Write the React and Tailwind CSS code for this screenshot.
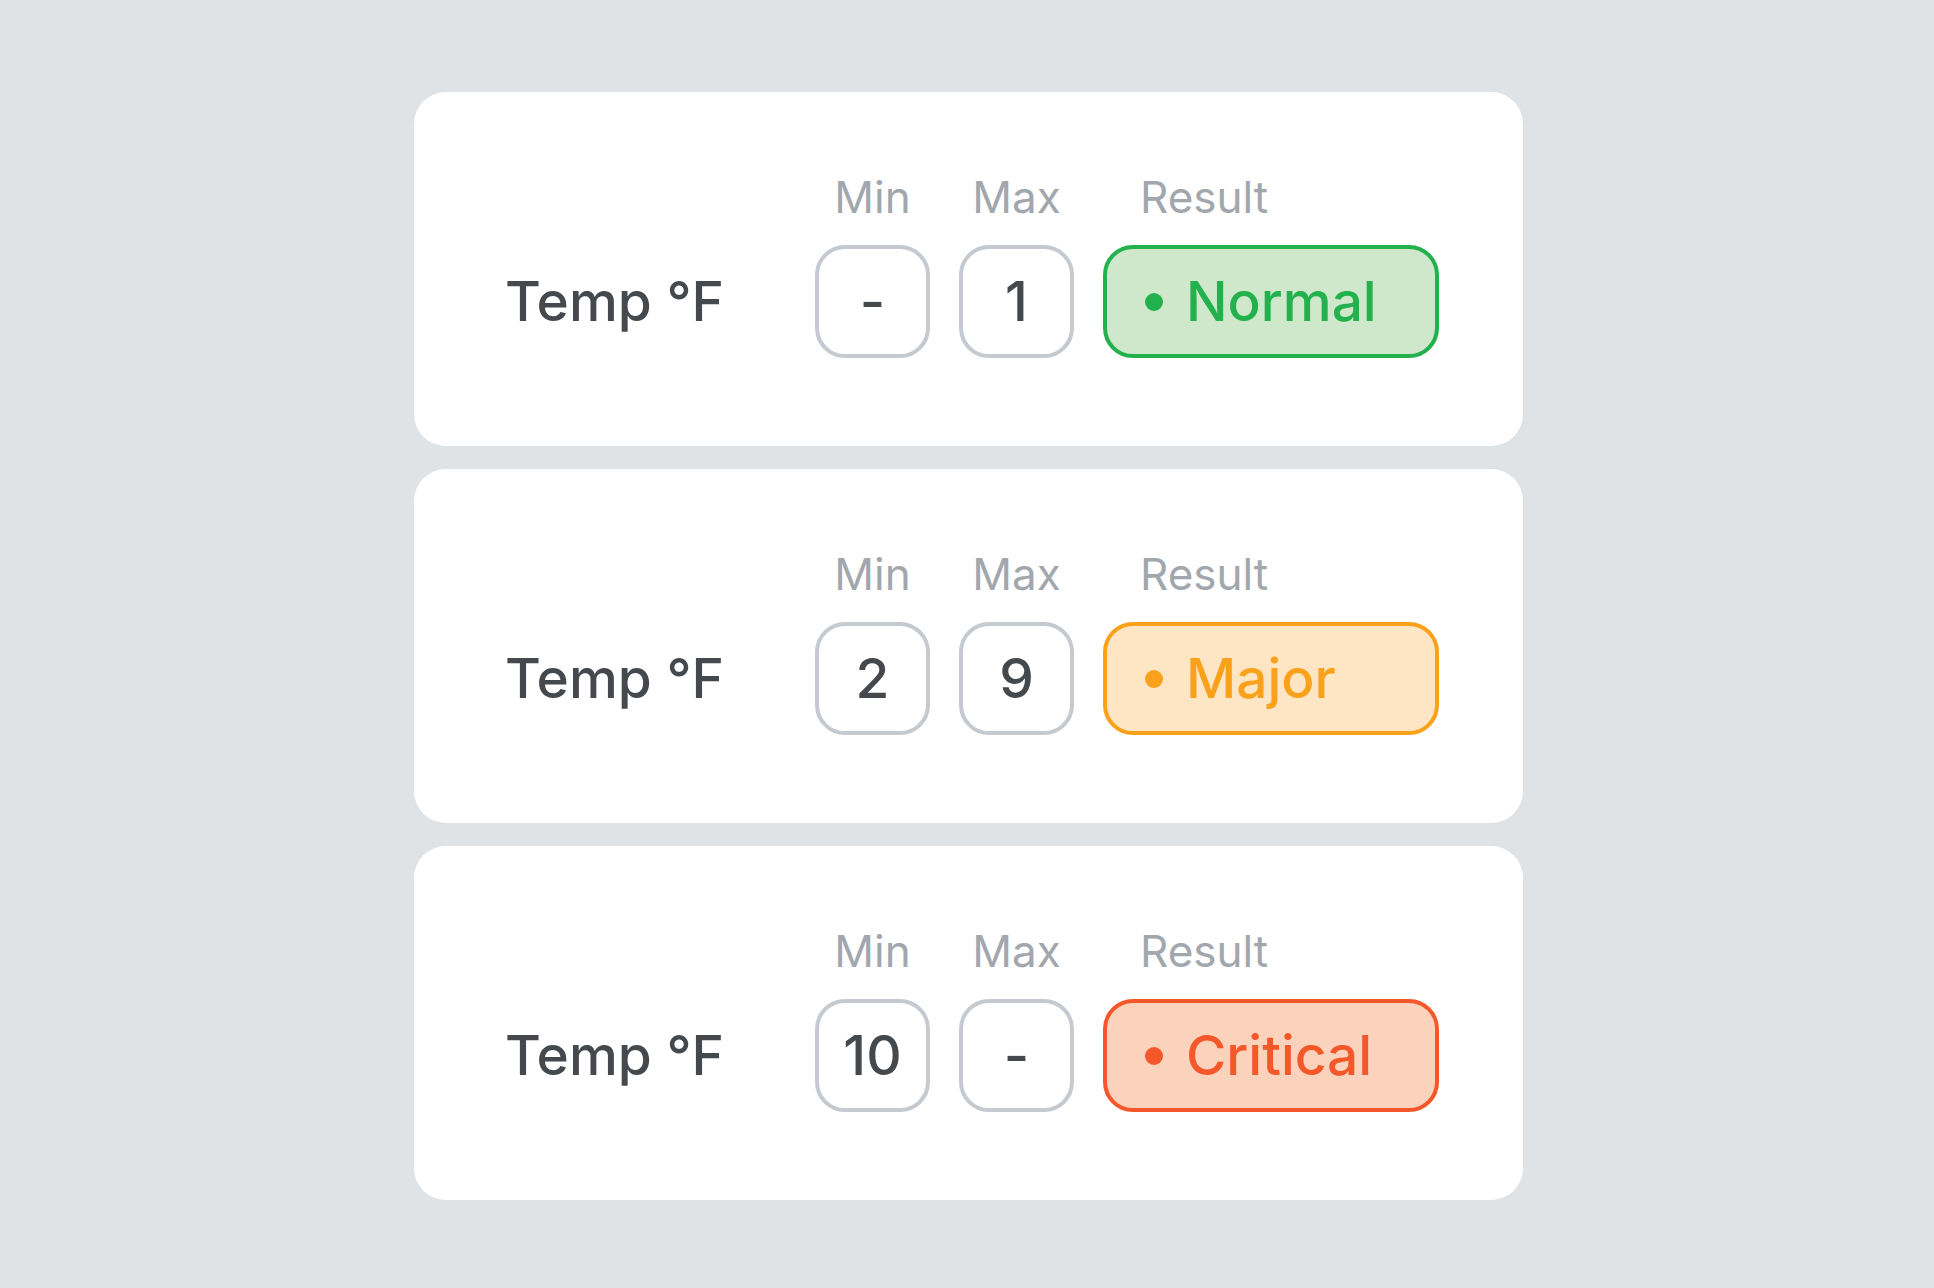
const rows = [
  { min: '-', max: '1', label: 'Normal', tone: 'normal' },
  { min: '2', max: '9', label: 'Major', tone: 'major' },
  { min: '10', max: '-', label: 'Critical', tone: 'critical' },
];

const tones = {
  normal: { badge: 'border-[#22b14c] bg-[#cfe8cc] text-[#22b14c]', dot: 'bg-[#22b14c]' },
  major: { badge: 'border-[#f9a11b] bg-[#fee6c4] text-[#f9a11b]', dot: 'bg-[#f9a11b]' },
  critical: { badge: 'border-[#f4572a] bg-[#fbd3bc] text-[#f4572a]', dot: 'bg-[#f4572a]' },
};

function ValueBox({ label, value }) {
  return (
    <div className="flex flex-col items-center gap-[22px]">
      <span className="text-[44px] leading-[51px] text-[#a2a7ae]">{label}</span>
      <div className="w-[115px] h-[113px] rounded-[30px] border-4 border-[#c5c9d0] flex items-center justify-center text-[55px] font-medium text-[#45494e]">
        {value}
      </div>
    </div>
  );
}

function ThresholdCard({ row }) {
  const tone = tones[row.tone];
  return (
    <div className="w-[1109px] bg-white rounded-[32px] pt-[80px] pb-[88px] pl-[91px] flex items-end">
      <div className="w-[310px] h-[113px] flex items-center text-[55px] font-medium text-[#45494e]">
        Temp °F
      </div>
      <div className="flex items-end gap-[29px]">
        <ValueBox label="Min" value={row.min} />
        <ValueBox label="Max" value={row.max} />
        <div className="flex flex-col gap-[22px]">
          <span className="pl-[37px] text-[44px] leading-[51px] text-[#a2a7ae]">Result</span>
          <div className={`w-[336px] h-[113px] rounded-[30px] border-4 flex items-center pl-[38px] gap-[23px] text-[55px] font-medium ${tone.badge}`}>
            <span className={`w-[18px] h-[18px] rounded-full ${tone.dot}`} />
            <span>{row.label}</span>
          </div>
        </div>
      </div>
    </div>
  );
}

export default function App() {
  return (
    <div
      className="min-h-screen bg-[#dfe3e6] flex flex-col items-center pt-[92px] pl-[3px] gap-[23px]"
      style={{ fontFamily: 'Inter, "Noto Sans", sans-serif' }}
    >
      {rows.map((row, i) => (
        <ThresholdCard key={i} row={row} />
      ))}
    </div>
  );
}
